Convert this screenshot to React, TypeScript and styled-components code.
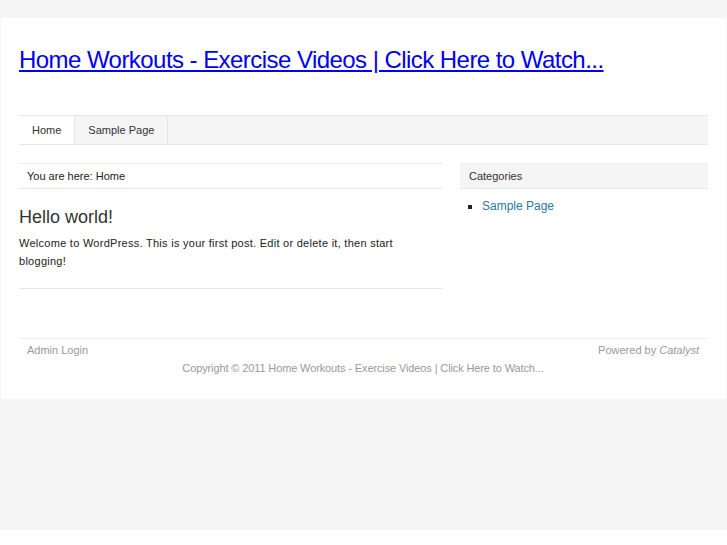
import React from 'react';
import styled, { createGlobalStyle } from 'styled-components';

const GlobalStyle = createGlobalStyle`
  html { background: #ffffff; }
  body {
    margin: 0;
    font-family: "Liberation Sans", Arial, sans-serif;
    color: #222;
  }
`;

const Page = styled.div`
  background: #f5f5f5;
  height: 530px;
  padding-top: 18px;
  box-sizing: border-box;
`;

const Wrap = styled.div`
  background: #ffffff;
  margin: 0 1px;
  padding: 0 18px 24px;
`;

const Header = styled.header`
  height: 97px;
  display: flex;
  align-items: flex-start;
  padding-top: 28px;
  box-sizing: border-box;
`;

const SiteTitle = styled.a`
  font-size: 24px;
  line-height: 28px;
  letter-spacing: -0.55px;
  color: #0000ee;
  text-decoration: underline;
`;

const Nav = styled.nav`
  display: flex;
  background: #f5f5f5;
  border-top: 1px solid #e6e6e6;
  border-bottom: 1px solid #e6e6e6;
  height: 28px;
`;

const NavItem = styled.a<{ active?: boolean }>`
  display: flex;
  align-items: center;
  padding: 0 13px;
  font-size: 11px;
  color: #333;
  text-decoration: none;
  background: ${({ active }) => (active ? '#ffffff' : 'transparent')};
  border-right: 1px solid #e6e6e6;
`;

const Columns = styled.div`
  display: flex;
  justify-content: space-between;
  margin-top: 18px;
`;

const Main = styled.main`
  width: 424px;
`;

const Breadcrumb = styled.div`
  border-top: 1px solid #eeeeee;
  border-bottom: 1px solid #e6e6e6;
  height: 24px;
  display: flex;
  align-items: center;
  padding: 0 8px;
  font-size: 11px;
  color: #222;
`;

const Post = styled.article`
  border-bottom: 1px solid #e6e6e6;
  padding: 16px 0 18px;
`;

const PostTitle = styled.h2`
  margin: 0 0 5px;
  font-size: 18px;
  font-weight: normal;
  line-height: 24px;
  color: #333;
`;

const PostText = styled.p`
  margin: 0;
  font-size: 11px;
  line-height: 18px;
  letter-spacing: 0.27px;
  color: #222;
`;

const Sidebar = styled.aside`
  width: 248px;
`;

const WidgetTitle = styled.h4`
  margin: 0;
  background: #f5f5f5;
  border-top: 1px solid #eeeeee;
  border-bottom: 1px solid #e6e6e6;
  height: 24px;
  display: flex;
  align-items: center;
  padding: 0 9px;
  font-size: 11px;
  font-weight: normal;
  color: #333;
`;

const List = styled.ul`
  margin: 9px 0 0;
  padding: 0 0 0 22px;
  list-style: square;
  font-size: 12px;
  line-height: 16px;
`;

const ListLink = styled.a`
  color: #2b7aa0;
  text-decoration: none;
  font-size: 12px;
`;

const Footer = styled.footer`
  margin-top: 49px;
  border-top: 1px solid #eeeeee;
  padding: 4px 9px 0 8px;
  font-size: 11px;
  color: #999;
`;

const FooterRow = styled.div`
  display: flex;
  justify-content: space-between;
  line-height: 14px;
`;

const Copyright = styled.div`
  text-align: center;
  margin-top: 4px;
  line-height: 14px;
  letter-spacing: -0.12px;
`;

const FooterLink = styled.a`
  color: #999;
  text-decoration: none;
`;

export default function App() {
  return (
    <>
      <GlobalStyle />
      <Page>
        <Wrap>
          <Header>
            <SiteTitle href="#">Home Workouts - Exercise Videos | Click Here to Watch...</SiteTitle>
          </Header>
          <Nav>
            <NavItem href="#" active>Home</NavItem>
            <NavItem href="#">Sample Page</NavItem>
          </Nav>
          <Columns>
            <Main>
              <Breadcrumb>You are here: Home</Breadcrumb>
              <Post>
                <PostTitle>Hello world!</PostTitle>
                <PostText>
                  Welcome to WordPress. This is your first post. Edit or delete it, then start blogging!
                </PostText>
              </Post>
            </Main>
            <Sidebar>
              <WidgetTitle>Categories</WidgetTitle>
              <List>
                <li><ListLink href="#">Sample Page</ListLink></li>
              </List>
            </Sidebar>
          </Columns>
          <Footer>
            <FooterRow>
              <FooterLink href="#">Admin Login</FooterLink>
              <span>Powered by <FooterLink href="#"><i>Catalyst</i></FooterLink></span>
            </FooterRow>
            <Copyright>Copyright © 2011 Home Workouts - Exercise Videos | Click Here to Watch...</Copyright>
          </Footer>
        </Wrap>
      </Page>
    </>
  );
}
